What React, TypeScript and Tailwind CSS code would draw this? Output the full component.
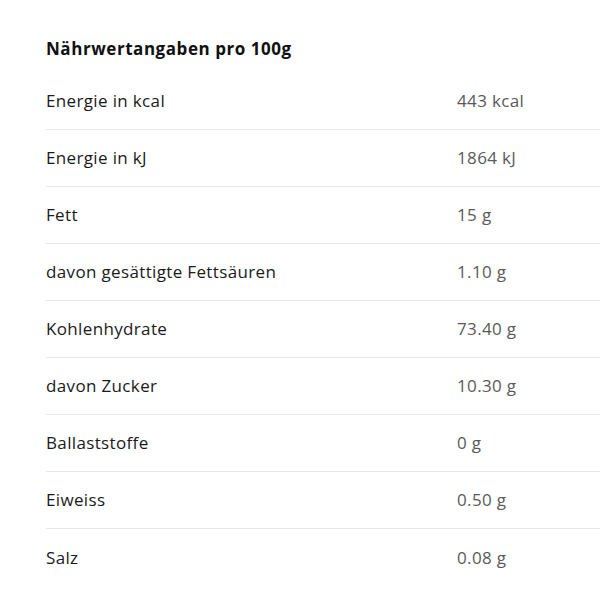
const rows: [string, string][] = [
  ['Energie in kcal', '443 kcal'],
  ['Energie in kJ', '1864 kJ'],
  ['Fett', '15 g'],
  ['davon gesättigte Fettsäuren', '1.10 g'],
  ['Kohlenhydrate', '73.40 g'],
  ['davon Zucker', '10.30 g'],
  ['Ballaststoffe', '0 g'],
  ['Eiweiss', '0.50 g'],
  ['Salz', '0.08 g'],
];

export default function App() {
  return (
    <div className="w-[600px] h-[600px] bg-white pl-[46px] pt-[36px] font-['Open_Sans',_sans-serif] overflow-hidden">
      <h2 className="text-[17px] font-bold text-[#111] leading-[26px] tracking-[0.55px] mb-[11px]">
        Nährwertangaben pro 100g
      </h2>
      <div>
        {rows.map(([label, value], i) => (
          <div
            key={label}
            className={
              'grid grid-cols-[411px_1fr] items-center h-[57px] text-[17px] tracking-[0.35px] ' +
              (i < rows.length - 1 ? 'border-b border-[#e8e8e8]' : '')
            }
          >
            <span className="text-[#1a1a1a]">{label}</span>
            <span className="text-[#5a5a5a]">{value}</span>
          </div>
        ))}
      </div>
    </div>
  );
}
